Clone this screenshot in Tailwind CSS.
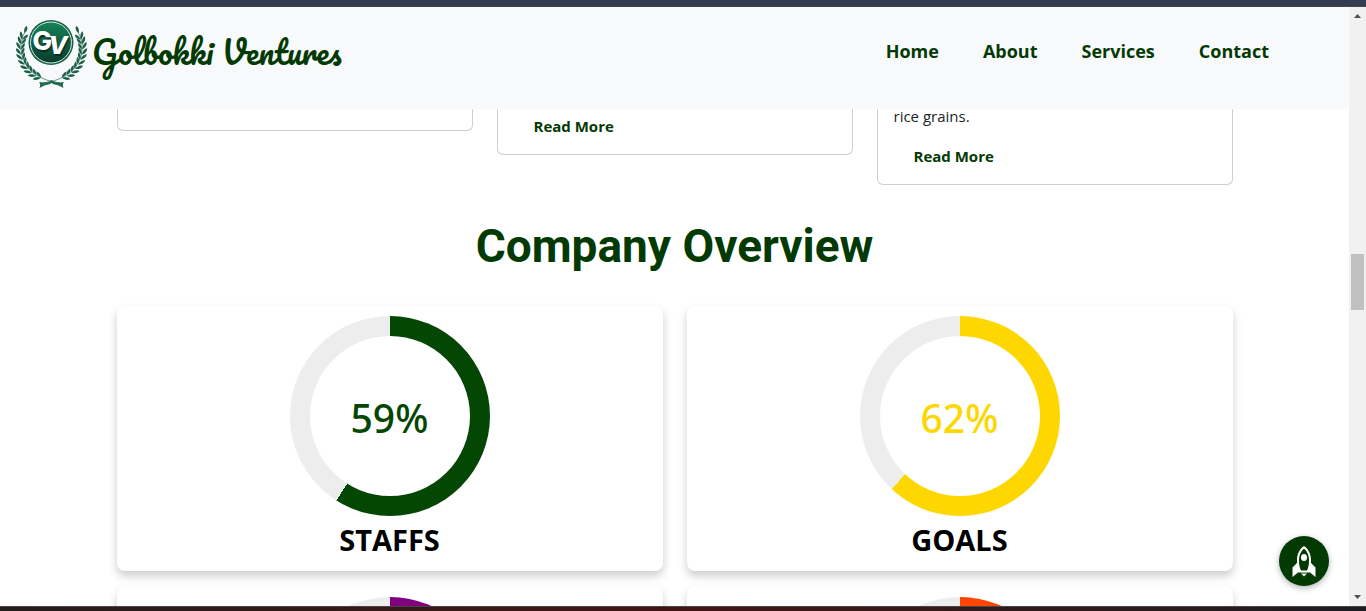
<!DOCTYPE html>
<html lang="en">
<head>
<meta charset="utf-8">
<meta name="viewport" content="width=device-width, initial-scale=1">
<title>Golbokki Ventures</title>
<script src="https://cdn.jsdelivr.net/npm/@tailwindcss/browser@4"></script>
</head>
<body class="flex h-screen flex-col overflow-hidden bg-white font-['Segoe_UI','Open_Sans',sans-serif] text-[#212529]">
<div class="h-[7px] shrink-0 border-b border-[#414550] bg-[#343d50]"></div>
<div class="flex min-h-0 flex-1">
  <div class="relative flex min-w-0 flex-1 flex-col overflow-hidden">
    <header class="flex h-[102px] shrink-0 items-start justify-between bg-[#f8f9fb] pr-20 pl-4 text-[#033a03]">
      <a href="#" class="flex items-start pt-3">
        <svg class="h-[70px] w-[72px]" viewBox="16 19 72 70" role="img" aria-label="Golbokki Ventures crest">
          <defs>
            <linearGradient id="disc" x1="0" y1="0" x2="0" y2="1"><stop offset="0" stop-color="#14835a"/><stop offset="1" stop-color="#0c3b2b"/></linearGradient>
            <g id="pair" fill="#1d6148">
              <path d="M51 79.500C49 82.500 46.500 84 43.500 83.500C44.500 80.800 47.500 79.200 51 79.500Z"/>
              <path d="M51 79C49.500 76 47 74.700 44.500 75C45.300 77.800 48 79.200 51 79Z"/>
            </g>
            <g id="branch">
              <path d="M60 83C40 81 19 68 21 44Q22 36 26 30" fill="none" stroke="#3b7b65" stroke-width=".8"/>
              <use href="#pair" transform="rotate(19 51 49)"/>
              <use href="#pair" transform="rotate(29 51 49)"/>
              <use href="#pair" transform="rotate(39 51 49)"/>
              <use href="#pair" transform="rotate(49 51 49)"/>
              <use href="#pair" transform="rotate(59 51 49)"/>
              <use href="#pair" transform="rotate(69 51 49)"/>
              <use href="#pair" transform="rotate(79 51 49)"/>
              <use href="#pair" transform="rotate(89 51 49)"/>
              <use href="#pair" transform="rotate(99 51 49)"/>
              <use href="#pair" transform="rotate(108 51 49)"/>
              <path d="M27 26C24.500 27 23.500 30 24.500 33C27 31.500 28 29 27 26Z" fill="#1d6148"/>
              <path d="M53 80Q46 83.500 39 82Q41 84 39.500 88Q44 85 50 84Q52 83 53 80Z" fill="#1c6b4e"/>
            </g>
          </defs>
          <use href="#branch"/>
          <use href="#branch" transform="translate(103 0) scale(-1 1)"/>
          <circle cx="51" cy="42.500" r="22.500" fill="#166247"/>
          <circle cx="51" cy="42.500" r="20.500" fill="url(#disc)" stroke="#d7e6df" stroke-width="1"/>
          <text class="[text-shadow:1px_2px_1px_#082d20]" x="50" y="50" text-anchor="middle" font-family="Inter, sans-serif" font-weight="800" font-size="26" fill="#fff">G<tspan dx="-4" dy="4" font-size="25" font-style="italic">V</tspan></text>
        </svg>
        <span class="pt-2 pl-1 font-[Pacifico,cursive] text-[32px] leading-[48px] font-normal">Golbokki Ventures</span>
      </a>
      <nav class="flex gap-11 pt-8 text-[18px] leading-6 font-bold">
        <a href="#">Home</a><a href="#">About</a><a href="#">Services</a><a href="#">Contact</a>
      </nav>
    </header>
    <main class="mx-auto w-full max-w-[1140px] px-3">
      <section class="grid grid-cols-3 items-start gap-6 text-[15px] leading-6">
        <article class="h-[22px] rounded-b-md border border-t-0 border-[#cfcfcf]"></article>
        <article class="rounded-b-md border border-t-0 border-[#cfcfcf] px-9 pt-[5px] pb-4"><a href="#" class="font-bold text-[#033a03]">Read More</a></article>
        <article class="rounded-b-md border border-t-0 border-[#cfcfcf] px-4 pb-4">
          <p class="-mt-[5px]">rice grains.</p>
          <a href="#" class="mt-4 block px-5 font-bold text-[#033a03]">Read More</a>
        </article>
      </section>
      <h2 class="mt-[33px] mb-[31px] text-center font-[Roboto,sans-serif] text-[46px] leading-[57px] font-bold text-[#033a03]">Company Overview</h2>
      <section class="grid grid-cols-2 gap-x-6 gap-y-4 text-center">
        <article class="rounded-lg bg-white pt-[10px] pb-3 shadow-[0_5px_10px_rgba(0,0,0,0.2)]">
          <div class="mx-auto grid size-[200px] place-items-center rounded-full bg-[conic-gradient(#044604_59%,#ededed_0)]"><div class="grid size-40 place-items-center rounded-full bg-white pt-1 font-['Noto_Sans',sans-serif] text-[39px] font-medium text-[#044604]">59%</div></div>
          <h3 class="pt-1 text-[29px] leading-[39px] font-bold text-black">STAFFS</h3>
        </article>
        <article class="rounded-lg bg-white pt-[10px] pb-3 shadow-[0_5px_10px_rgba(0,0,0,0.2)]">
          <div class="mx-auto grid size-[200px] place-items-center rounded-full bg-[conic-gradient(#ffd700_62%,#ededed_0)]"><div class="grid size-40 place-items-center rounded-full bg-white pt-1 font-['Noto_Sans',sans-serif] text-[39px] font-medium text-[#ffd700]">62%</div></div>
          <h3 class="pt-1 text-[29px] leading-[39px] font-bold text-black">GOALS</h3>
        </article>
        <article class="rounded-lg bg-white pt-[10px] pb-3 shadow-[0_5px_10px_rgba(0,0,0,0.2)]">
          <div class="mx-auto grid size-[200px] place-items-center rounded-full bg-[conic-gradient(#800080_50%,#ededed_0)]"><div class="size-40 rounded-full bg-white"></div></div>
        </article>
        <article class="rounded-lg bg-white pt-[10px] pb-3 shadow-[0_5px_10px_rgba(0,0,0,0.2)]">
          <div class="mx-auto grid size-[200px] place-items-center rounded-full bg-[conic-gradient(#ff4500_50%,#ededed_0)]"><div class="size-40 rounded-full bg-white"></div></div>
        </article>
      </section>
    </main>
    <button type="button" aria-label="Back to top" class="absolute right-5 bottom-5 grid size-[50px] place-items-center rounded-full bg-[#033a03] shadow-[0_2px_6px_rgba(0,0,0,0.3)]">
      <svg class="h-[31px] w-6" viewBox="0 0 24 31" fill="#fff">
        <path fill-rule="evenodd" d="M12 0C7.500 3 5 8 5 14V17L.5 21.500V31L6 26.500H18L23.500 31V21.500L19 17V14C19 8 16.500 3 12 0ZM12 2.500C15.500 5.500 17 9.500 17 14C17 18 16.500 21.500 15 24.500H9C7.500 21.500 7 18 7 14C7 9.500 8.500 5.500 12 2.500Z"/>
        <ellipse cx="12" cy="11.500" rx="3" ry="3.600"/>
        <path d="M9 27.500H15L12 30.500Z"/>
      </svg>
    </button>
  </div>
  <div class="flex w-[17px] shrink-0 flex-col items-center bg-[#f1f1f1] py-[7px]" aria-hidden="true">
    <svg class="h-1 w-[7px]" viewBox="0 0 7 4"><path d="M0 4L3.500 0L7 4Z" fill="#505050"/></svg>
    <div class="mb-[2px] w-full basis-[40%]"></div>
    <div class="h-14 w-[13px] shrink-0 bg-[#c1c1c1]"></div>
    <div class="flex-1"></div>
    <svg class="h-1 w-[7px]" viewBox="0 0 7 4"><path d="M0 0H7L3.500 4Z" fill="#505050"/></svg>
  </div>
</div>
<div class="h-[5px] shrink-0 border-t border-[#4a4444] bg-linear-to-r from-[#231c1b] via-[#421414] to-[#1d1c20]"></div>
</body>
</html>
